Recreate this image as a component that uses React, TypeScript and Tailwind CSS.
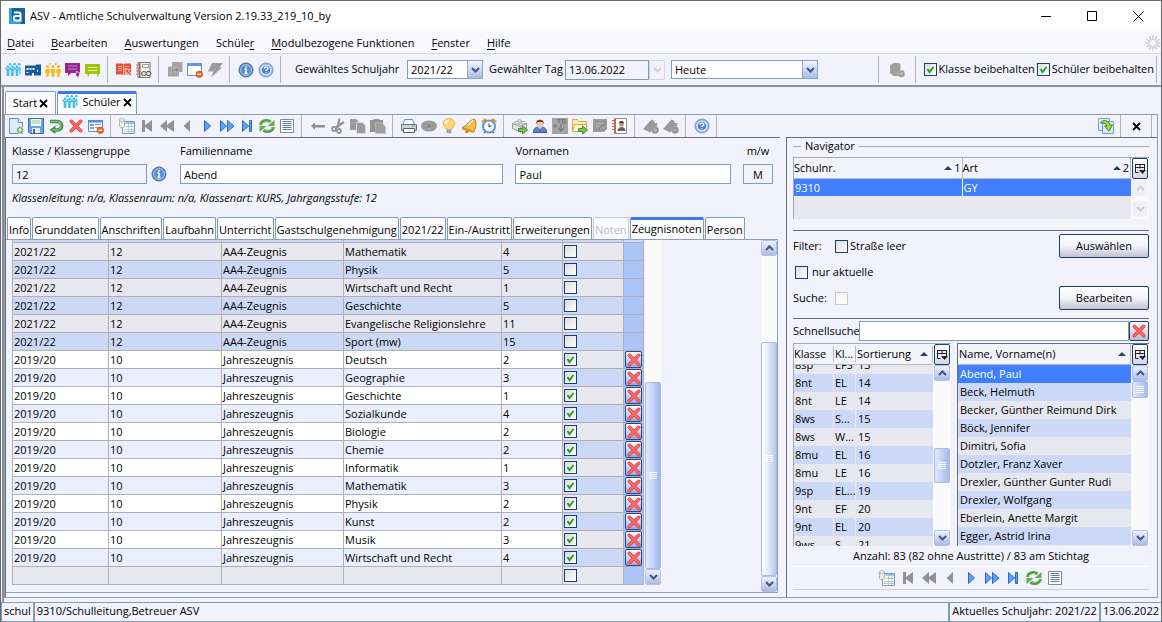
import type { ReactNode } from "react";
import clsx from "clsx";

interface IGrade {
  year: string;
  level: string;
  report: string;
  subject: string;
  grade: string;
  checked: boolean;
}

const current = (subject: string, grade: string): IGrade => ({
  year: "2021/22", level: "12", report: "AA4-Zeugnis", subject, grade, checked: false,
});
const past = (subject: string, grade: string): IGrade => ({
  year: "2019/20", level: "10", report: "Jahreszeugnis", subject, grade, checked: true,
});

const GRADES: IGrade[] = [
  current("Mathematik", "4"),
  current("Physik", "5"),
  current("Wirtschaft und Recht", "1"),
  current("Geschichte", "5"),
  current("Evangelische Religionslehre", "11"),
  current("Sport (mw)", "15"),
  past("Deutsch", "2"),
  past("Geographie", "3"),
  past("Geschichte", "1"),
  past("Sozialkunde", "4"),
  past("Biologie", "2"),
  past("Chemie", "2"),
  past("Informatik", "1"),
  past("Mathematik", "3"),
  past("Physik", "2"),
  past("Kunst", "2"),
  past("Musik", "3"),
  past("Wirtschaft und Recht", "4"),
  { year: "", level: "", report: "", subject: "", grade: "", checked: false },
];

const CLASSES = [
  ["8sp", "EFS", "13"],
  ["8nt", "EL", "14"],
  ["8nt", "LE", "14"],
  ["8ws", "S...", "15"],
  ["8ws", "W...", "15"],
  ["8mu", "EL", "16"],
  ["8mu", "LE", "16"],
  ["9sp", "EL...", "19"],
  ["9nt", "EF", "20"],
  ["9nt", "EL", "20"],
  ["9ws", "S", "21"],
];

const STUDENTS = [
  "Abend, Paul",
  "Beck, Helmuth",
  "Becker, Günther Reimund Dirk",
  "Böck, Jennifer",
  "Dimitri, Sofia",
  "Dotzler, Franz Xaver",
  "Drexler, Günther Gunter Rudi",
  "Drexler, Wolfgang",
  "Eberlein, Anette Margit",
  "Egger, Astrid Irina",
];

const MENU = [
  ["", "D", "atei"],
  ["", "B", "earbeiten"],
  ["", "A", "uswertungen"],
  ["Schüle", "r", ""],
  ["", "M", "odulbezogene Funktionen"],
  ["", "F", "enster"],
  ["", "H", "ilfe"],
];

const TABS = [
  "Info", "Grunddaten", "Anschriften", "Laufbahn", "Unterricht", "Gastschulgenehmigung",
  "2021/22", "Ein-/Austritt", "Erweiterungen", "Noten", "Zeugnisnoten", "Person",
];

/* ---------- icons ---------- */

function Svg({ children, size = 16 }: { children: ReactNode; size?: number }) {
  return (
    <svg width={size} height={size} viewBox="0 0 16 16" fill="none" aria-hidden="true" className="shrink-0">
      {children}
    </svg>
  );
}

const people = (
  <Svg>
    <g fill="#f8b912">
      {[2.5, 8, 13.5].map((x) => (
        <g key={x}>
          <circle cx={x} cy="4.500" r="1.600" />
          <path d={`M${x - 2.2} 7h4.400v4h-1v4h-2.400v-4h-1z`} />
        </g>
      ))}
      <circle cx="5.300" cy="2" r="1.100" />
      <circle cx="10.700" cy="2" r="1.100" />
    </g>
  </Svg>
);

const kids = (
  <Svg>
    <g fill="#3fc0e4">
      {[3, 7.5, 12].map((x) => (
        <g key={x}>
          <circle cx={x} cy="5" r="1.400" />
          <path d={`M${x - 1.3} 7.500h2.600v6.500h-2.600z`} />
        </g>
      ))}
      <circle cx="5.300" cy="2.300" r="1.300" />
      <circle cx="9.800" cy="2.300" r="1.300" />
      <circle cx="14.300" cy="2.300" r="1.300" />
    </g>
    <path d="M.5 6L3 8.500 5.300 6l2.200 2.500L9.800 6 12 8.500 15.300 5" stroke="#3fc0e4" strokeWidth="1.500" />
    <path d="M14.800 6v6" stroke="#3fc0e4" strokeWidth="1.200" />
  </Svg>
);

const school = (
  <Svg>
    <path d="M0 3.500h11V2.500h5v11H9V11H7v2.500H0z" fill="#165c9c" />
    <path d="M1.500 6h2v2h-2zM4.500 6h2v2h-2zM7.500 6h2v2h-2zM1.500 10h2v1h-2zM12 8h1v2h-1z" fill="#f4f7ff" />
  </Svg>
);

const chatPurple = (
  <Svg>
    <path d="M0 1h15v10H6l-3 3v-3H0z" fill="#93268f" />
    <path d="M3 4h9M3 7h9" stroke="#c98bc7" />
    <path d="M11.500 9.500l3.500 1.500-1.500 4.500-3-2z" fill="#93268f" stroke="#f0dcef" strokeWidth=".8" />
  </Svg>
);

const chatGreen = (
  <Svg>
    <path d="M0 2h15v10h-1.500v2.500h-1.500V12H4v2.500H2.500V12H0z" fill="#a0c40e" />
    <path d="M3 5.500h9M3 8.500h9" stroke="#e2f0b8" strokeWidth="1.200" />
  </Svg>
);

const bookRed = (
  <Svg>
    <path d="M0 1.500h6.500L7.500 2.500l1-1H15v11H8.500l-1 1-1-1H0z" fill="#e8502f" />
    <path d="M2 4.500h4M2 6.500h4M2 8.500h4M9 4.500h4M7.500 3v10" stroke="#f7b8a8" />
    <path d="M9 6.500l5 1-1.500 1.500 3 3.500-1.500 1.500-3-3.500-1.500 1.500z" fill="#e8502f" stroke="#fff" strokeWidth=".8" />
  </Svg>
);

const notebook = (
  <Svg>
    <path d="M2 .5h12v15H2z" fill="#f0f0f3" stroke="#777" />
    <path d="M3 1h1.500v14H3z" fill="#c0583b" />
    <path d="M0 3h3M0 6h3M0 9h3M0 12h3" stroke="#888" />
    <path d="M6.500 2.500h6v3h-6z" stroke="#999" fill="#fff" />
    <rect x="5.500" y="9.500" width="5" height="4" rx="2" stroke="#555" fill="#ddd" />
    <rect x="10" y="9.500" width="5" height="4" rx="2" stroke="#555" fill="#ddd" />
  </Svg>
);

const grayCards = (
  <Svg>
    <path d="M5 0h10.500v10H12v4.500H1V4.500h4z" fill="#a4a4a4" />
    <path d="M4 11.500c0-4 2-5 4.500-5v-2l4 3.200-4 3.200V9c-2 0-3 .8-4.500 2.500z" fill="#8b8b8b" stroke="#c6c6c6" strokeWidth=".7" />
  </Svg>
);

const minusDot = (
  <>
    <circle cx="12.300" cy="12.300" r="3.300" fill="#e8641b" stroke="#c84a0c" strokeWidth=".6" />
    <path d="M10.500 12.300h3.600" stroke="#fff" strokeWidth="1.400" />
  </>
);

const windowMinus = (
  <Svg>
    <path d="M.5 1.500h14v12H.5z" fill="#fff" stroke="#5b8fd0" />
    <path d="M0 1h15v3H0z" fill="#5b9be0" />
    {minusDot}
  </Svg>
);

const bolt = (
  <Svg>
    <path d="M5 1h11l-3.500 4.500H15L4 15.500 6.500 9.500H1z" fill="#9a9a9a" />
  </Svg>
);

const info = (
  <Svg>
    <circle cx="8" cy="8" r="7" fill="#5c8ec8" stroke="#3e6ca6" strokeWidth="1" />
    <circle cx="8" cy="8" r="5.400" stroke="#b4cfec" strokeWidth=".9" />
    <path d="M8 4v1.600M6.500 7H8v4.500M6.500 11.500h3" stroke="#fff" strokeWidth="1.500" />
  </Svg>
);

const help = (
  <Svg>
    <circle cx="8" cy="8" r="7" fill="#8fb4de" stroke="#7298c8" strokeWidth="1" />
    <circle cx="8" cy="8" r="5" fill="#5088cc" stroke="#e6effa" strokeWidth="1.200" />
    <path d="M6.200 6.700c0-2.600 3.700-2.400 3.600-.2 0 1.200-1.800 1.300-1.800 2.600M8 10.300v1.300" stroke="#fff" strokeWidth="1.300" />
  </Svg>
);

const newDoc = (
  <Svg>
    <path d="M1.500.5h9l4 4v11h-13z" fill="#dcebfa" stroke="#5f94cf" />
    <path d="M10.500.5v4h4" fill="#fff" stroke="#5f94cf" />
    <circle cx="12" cy="12" r="3.500" fill="#5da845" stroke="#fff" strokeWidth=".7" />
    <path d="M12 10v4M10 12h4" stroke="#fff" strokeWidth="1.200" />
  </Svg>
);

const save = (
  <Svg>
    <path d="M.5.5h15v15H2L.5 14z" fill="#6ea3de" stroke="#3c70ae" />
    <path d="M3 1h10v7H3z" fill="#f1f6ea" />
    <path d="M4 3h8M4 5h8" stroke="#a7c48f" />
    <path d="M4 10h8v5H4z" fill="#dfe8f4" />
    <path d="M5 11h2v4H5z" fill="#3c70ae" />
  </Svg>
);

const undo = (
  <Svg>
    <path d="M2 3.500h7.500c5.500 0 5.500 8.500 0 8.500H7" stroke="#3f8f45" strokeWidth="3.600" />
    <path d="M7.500 7.500v8.500L1.500 12z" fill="#3f8f45" />
    <path d="M2.500 3.500h7c4.500 0 4.500 8.500 0 8.500H4" stroke="#7cc27a" strokeWidth="1.400" />
  </Svg>
);

const cross = (
  <Svg>
    <path d="M3.300 3.300l9.400 9.400M12.700 3.300l-9.400 9.400" stroke="#e03f3f" strokeWidth="3.600" strokeLinecap="round" />
    <path d="M3.300 3.300l9.400 9.400M12.700 3.300l-9.400 9.400" stroke="#ff6a68" strokeWidth="2.200" strokeLinecap="round" />
  </Svg>
);

const formMinus = (
  <Svg>
    <path d="M.5 2.500h14v11H.5z" fill="#f3f8ff" stroke="#5b8fd0" />
    <path d="M0 2h15v2.500H0z" fill="#4f8fdd" />
    <path d="M2 7h4M2 10h4" stroke="#444" />
    <path d="M7 6.500h6M7 9.500h3" stroke="#7aa5d8" />
    {minusDot}
  </Svg>
);

const dbTable = (
  <Svg>
    <path d="M3.500 3.500h12v12h-12z" fill="#fff" stroke="#6f9cd6" />
    <path d="M6.500 4H15v2H6.500z" fill="#9cc2ea" />
    <path d="M6.500 8.500H15M5 11.500h10M5 13.500h10" stroke="#9acb96" strokeWidth=".8" />
    <path d="M9.500 6v9M12.500 6v9" stroke="#a8c8ea" strokeWidth=".8" />
    <path d="M.5 2v6.500c0 1.700 5 1.700 5 0V2" fill="#ececec" stroke="#a5a5a5" strokeWidth=".8" />
    <ellipse cx="3" cy="2" rx="2.500" ry="1.400" fill="#fafafa" stroke="#a5a5a5" strokeWidth=".8" />
  </Svg>
);

const firstRec = (
  <Svg>
    <path d="M3 2h3v5l7-5v12L6 9v5H3z" fill="#929292" />
  </Svg>
);
const rewind = (
  <Svg>
    <path d="M8 2v5l7-5v12L8 9v5L1 8z" fill="#929292" />
  </Svg>
);
const prev = (
  <Svg>
    <path d="M11 2v12L4.500 8z" fill="#929292" />
  </Svg>
);
const next = (
  <Svg>
    <path d="M5.500 2.500v11l6-5.500z" fill="#5da2f5" stroke="#2a6ad0" />
  </Svg>
);
const forward = (
  <Svg>
    <path d="M1.500 2.500v11l6-5.500zM8.500 2.500v11L15 8z" fill="#5da2f5" stroke="#2a6ad0" />
  </Svg>
);
const lastRec = (
  <Svg>
    <path d="M3.500 2.500v11l6-5.500zM10.500 2.500h2v11h-2z" fill="#5da2f5" stroke="#2a6ad0" />
    <path d="M9.500 8l1.500-4v8z" fill="#2a6ad0" />
  </Svg>
);

const refresh = (
  <Svg>
    <path d="M1.500 7c1-5 7-5.500 10-3" stroke="#4f9f43" strokeWidth="3" />
    <path d="M15.500 2v6H8.500z" fill="#5fae50" />
    <path d="M14.500 9c-1 5-7 5.500-10 3" stroke="#4f9f43" strokeWidth="3" />
    <path d="M.5 14V8h7z" fill="#5fae50" />
    <path d="M2.500 6.500c2-3.500 6-3.500 9-1.500M13.500 9.500c-2 3.500-6 3.500-9 1.500" stroke="#9fd694" strokeWidth=".9" />
  </Svg>
);

const listDoc = (
  <Svg>
    <path d="M1.500 1.500h13v13h-13z" fill="#fff" stroke="#8a8a8a" />
    <path d="M3.500 3.500h9M3.500 5.500h9M3.500 7.500h9M3.500 9.500h9M3.500 11.500h9" stroke="#5a7ba8" />
  </Svg>
);

const arrowLeft = (
  <Svg>
    <path d="M1 8l4-3.500V7h10v2.500H5V12z" fill="#8e8e8e" />
  </Svg>
);

const scissors = (
  <Svg>
    <path d="M9.500.5L7.500 10M14 4l-9 6" stroke="#959595" strokeWidth="2.200" />
    <circle cx="4" cy="11" r="2" stroke="#959595" strokeWidth="1.800" />
    <circle cx="9" cy="13" r="2" stroke="#959595" strokeWidth="1.800" />
  </Svg>
);

const copy = (
  <Svg>
    <path d="M0 1h6l3 3v8H0z" fill="#9c9c9c" />
    <path d="M6.500 4.500h6l3 3v8h-9z" fill="#9c9c9c" stroke="#e0e0ea" strokeWidth=".8" />
  </Svg>
);

const paste = (
  <Svg>
    <path d="M0 2h3l1-1h5l1 1h3v12H0z" fill="#959595" />
    <path d="M5.500 4.500h6l4 4v7h-10z" fill="#9f9f9f" stroke="#bdbdc2" strokeWidth=".6" />
  </Svg>
);

const printer = (
  <Svg>
    <path d="M3.500 1.500h8l2 5h-11z" fill="#fff" stroke="#6491c9" />
    <path d="M.5 6.500h15v6H.5z" fill="#cdd3dd" stroke="#6a7484" />
    <path d="M2.500 10.500h11v4h-11z" fill="#f8fbff" stroke="#59626f" />
    <path d="M11 8h3" stroke="#54ad45" />
  </Svg>
);

const eye = (
  <Svg>
    <ellipse cx="8" cy="8" rx="8" ry="5.500" fill="#9a9a9a" />
    <circle cx="8" cy="8" r="2.600" fill="#858585" stroke="#aaa" />
  </Svg>
);

const bulb = (
  <Svg>
    <path d="M8 .6C4.500.6 2 3 2.200 6c.2 2.200 2.300 3.300 3.300 5.500h5c1-2.200 3.100-3.300 3.300-5.500.2-3-2.300-5.400-5.800-5.400z" fill="#fbd57a" stroke="#e8b049" />
    <path d="M4.500 5.500c.3-2 1.700-3 3.500-3" stroke="#fff6dc" strokeWidth="2" />
    <path d="M5.500 11.500h5v3l-1 1h-3l-1-1z" fill="#a2a8b3" />
  </Svg>
);

const bell = (
  <Svg>
    <path d="M13.500 1c2 3 2 8-.5 12.500L1 9.500c5-1 6-7 12.500-8.500z" fill="#f2bd4b" stroke="#c07d16" />
    <path d="M1 9.500l12 4-1 1.500L1 11.500z" fill="#e09a2a" />
    <circle cx="6" cy="13.500" r="1.800" fill="#d58a1b" />
    <path d="M7 8c1-3 3-4.500 5.500-5.500" stroke="#fbe9b8" strokeWidth="1.500" />
  </Svg>
);

const clock = (
  <Svg>
    <path d="M1 4l4-3M15 4l-4-3" stroke="#e29a2b" strokeWidth="2.500" />
    <path d="M3 15l2-2M13 15l-2-2" stroke="#666" strokeWidth="1.500" />
    <circle cx="8" cy="8.500" r="6" fill="#fff" stroke="#5f9ada" strokeWidth="2.200" />
    <path d="M8 5.500v3.500l2.500-1.500" stroke="#335" />
  </Svg>
);

const greenArrow = <path d="M6.500 10.500h4V8l5 4-5 4v-2.500h-4z" fill="#6cc84c" stroke="#3b8a2a" strokeWidth=".9" />;

const boxExport = (
  <Svg>
    <path d="M.5 5.500L6.500 2.500l8 3v5l-6 3.500-8-3.500z" fill="#e2e2e2" stroke="#999" />
    <path d="M.5 5.500l8 3 6-3M8.500 8.500V14" stroke="#a5a5a5" />
    <g fill="#f4f4f4" stroke="#999" strokeWidth=".7">
      <ellipse cx="4.500" cy="4.500" rx="1.800" ry="1.200" />
      <ellipse cx="7.500" cy="2.800" rx="1.800" ry="1.200" />
      <ellipse cx="8.500" cy="6" rx="1.800" ry="1.200" />
      <ellipse cx="11.500" cy="4.500" rx="1.800" ry="1.200" />
    </g>
    {greenArrow}
  </Svg>
);

const person = (
  <Svg>
    <path d="M1.500 14.500C1.500 10 4 9 8 9s6.500 1 6.500 5.500z" fill="#4a8ad6" stroke="#2b5fa3" />
    <circle cx="8" cy="5.500" r="3.500" fill="#f3c9a0" />
    <path d="M4 6C3.500.3 12.500.3 12 6l-1.500-2h-5z" fill="#6b4030" />
    <path d="M6 9.200h4l-2 2.500z" fill="#fff" />
    <path d="M8 10l1.200 1.500L8 14.500l-1.200-3z" fill="#d63a2a" />
  </Svg>
);

const tbGray = (
  <Svg>
    <path d="M0 0h16v16H0z" fill="#a4a4a4" />
    <path d="M5 1.500h4M7 1.500V5M10.500 1.500V5h2.500V1.500zM1 8h4M3 6v4M9 6v7M6 10l3 3 3-3" stroke="#7c7c7c" strokeWidth="1.300" />
  </Svg>
);

const folderExport = (
  <Svg>
    <path d="M.5 1.500h5l1.500 2h7.500v10H.5z" fill="#fdeeb4" stroke="#d9a93d" />
    <path d="M2.500 6.500h12v7H.5z" fill="#fff7da" stroke="#d9a93d" />
    {greenArrow}
  </Svg>
);

const editGray = (
  <Svg>
    <path d="M1 1h14v10l-3 3H1z" fill="#9d9d9d" />
    <path d="M3 3.500h10v8H3z" fill="#a6a6a6" stroke="#8e8e8e" />
    <path d="M6 11.500l8-7" stroke="#868686" strokeWidth="1.400" />
  </Svg>
);

const contacts = (
  <Svg>
    <path d="M2.500.5h12v15h-12z" fill="#fff" stroke="#9c8a80" />
    <path d="M2 1h2v14H2z" fill="#d0603f" />
    <path d="M0 2.500h3M0 5.500h3M0 8.500h3M0 11.500h3" stroke="#b07a60" />
    <circle cx="9.500" cy="6.500" r="2.300" fill="#c09068" />
    <path d="M6.800 6c0-4 5.400-4 5.400 0l-1-1h-3.400z" fill="#3a3230" />
    <path d="M5.500 13c0-5.500 8-5.500 8 0z" fill="#5b626e" />
  </Svg>
);

const tagGray = (sign: string) => (
  <Svg>
    <path d="M0 11L8.500 1.500 11.500 3v2h3l-.5 3L7 14.500z" fill="#9a9a9a" />
    <circle cx="12" cy="12" r="3.500" fill="#959595" stroke="#a8a8a8" strokeWidth=".7" />
    <path d={sign} stroke="#bdbdbd" />
  </Svg>
);

const dbGray = (
  <Svg>
    <path d="M1 3.500L4.500 1H10l1.500 1.500V12L10 14H4.500L1 11z" fill="#a0a0a0" />
    <path d="M2 5h8M2 8h8" stroke="#969696" />
    <circle cx="12.300" cy="11.800" r="3.500" fill="#9b9b9b" stroke="#c0c0c0" strokeWidth=".7" />
    <path d="M12.300 9.800v4M10.300 11.800h4" stroke="#c0c0c0" />
  </Svg>
);

const sync = (
  <Svg>
    <path d="M.5.5h11v12H.5z" fill="#e5f0fc" stroke="#6ea0d6" />
    <path d="M4.500 3.500h11v12h-11z" fill="#d6e7f9" stroke="#6ea0d6" />
    <path d="M2.500 5c1-3.500 8.500-3.500 9.500 2h2.500L11 13 6.500 8H9C8.500 5.500 6 5 2.500 5z" fill="#a6d837" stroke="#3f8a23" strokeWidth="1" />
  </Svg>
);

const columnPicker = (
  <svg width="12" height="12" viewBox="0 0 12 12" fill="none" aria-hidden="true" className="shrink-0">
    <path d="M1 1.500h10M1.500 1v8.500M6 1.500v4M1 4.500h10M10.500 1v6M1.500 9.500h3" stroke="#222" />
    <path d="M5 7h7l-3.500 4z" fill="#222" />
  </svg>
);

function Chevron({ up, muted }: { up?: boolean; muted?: boolean }) {
  return (
    <svg width="9" height="6" viewBox="0 0 9 6" fill="none" aria-hidden="true">
      <path d={up ? "M1 5l3.500-3.500L8 5" : "M1 1l3.500 3.500L8 1"} stroke={muted ? "#cfcfd6" : "#40577f"} strokeWidth="2" />
    </svg>
  );
}

/* ---------- controls ---------- */

function Sep() {
  return <span className="ml-1 mr-1.5 w-px self-stretch bg-[#b4b4bc]" />;
}

function Tools({ items, label, className }: { items: ReactNode[]; label: string; className?: string }) {
  return (
    <div className={clsx("flex", className)} role="group" aria-label={label}>
      {items.map((icon, i) => (
        <button key={i} type="button" aria-label={`${label} ${i + 1}`} className="grid h-5 w-5 place-items-center">
          {icon}
        </button>
      ))}
    </div>
  );
}

function Check({ id, checked, disabled, label }: { id: string; checked?: boolean; disabled?: boolean; label?: string }) {
  return (
    <span className="relative block h-[13px] w-[13px] shrink-0">
      <input
        id={id}
        type="checkbox"
        defaultChecked={checked}
        disabled={disabled}
        aria-label={label}
        className="peer block h-[13px] w-[13px] appearance-none border border-[#1c3f73] bg-linear-to-br from-[#dcdcdc] to-white disabled:border-[#cacad2] disabled:from-[#f4f4f4]"
      />
      <svg viewBox="0 0 13 13" fill="none" className="pointer-events-none absolute inset-0 hidden peer-checked:block" aria-hidden="true">
        <path d="M3.500 6l2 3L9.500 4" stroke="#21a121" strokeWidth="2" />
      </svg>
    </span>
  );
}

function Picker({ id, value, label, className }: { id: string; value: string; label?: string; className: string }) {
  return (
    <span className={clsx("relative block", className)}>
      <select id={id} aria-label={label} className="block h-[19px] w-full appearance-none border border-[#7f9db9] bg-white pl-[3px] text-[11px] leading-4">
        <option>{value}</option>
      </select>
      <span className="pointer-events-none absolute inset-y-0 right-0 grid w-4 place-items-center rounded-xs border border-[#8fa6cf] bg-linear-to-b from-[#f4f6ff] to-[#a9bbe6]">
        <Chevron />
      </span>
    </span>
  );
}

function ScrollButton({ up, muted, label }: { up?: boolean; muted?: boolean; label: string }) {
  return (
    <button
      type="button"
      aria-label={label}
      className={clsx(
        "grid h-4 w-4 shrink-0 place-items-center rounded-xs border",
        muted ? "border-[#f4f4f8] bg-[#f0f0f4]" : "border-[#b3c2e4] bg-linear-to-b from-[#eef2ff] to-[#a9bbe6]",
      )}
    >
      <Chevron up={up} muted={muted} />
    </button>
  );
}

function Thumb({ className }: { className: string }) {
  return (
    <div className={clsx("grid w-4 shrink-0 place-items-center rounded-xs border border-[#a9bbe3]", className)}>
      <div className="h-2 w-2 bg-[repeating-linear-gradient(180deg,#fff_0_1px,transparent_1px_2px)]" />
    </div>
  );
}

function PickerButton() {
  return (
    <button
      type="button"
      aria-label="Spalten wählen"
      className="grid h-[21px] w-4 shrink-0 place-items-center rounded-xs border border-[#1c3f73] bg-linear-to-b from-white to-[#d4d4e4]"
    >
      {columnPicker}
    </button>
  );
}

function PushButton({ children }: { children: ReactNode }) {
  return (
    <button
      type="button"
      className="h-6 w-[90px] rounded-xs border border-[#1c3f73] bg-linear-to-b from-white via-[#f2f2fa] to-[#c2c2d4]"
    >
      {children}
    </button>
  );
}

const SortMark = () => <span className="block h-0 w-0 border-x-4 border-b-4 border-x-transparent border-b-[#26405e]" />;

/* ---------- window chrome ---------- */

function TitleBar() {
  return (
    <header className="flex h-[30px] items-center bg-white pl-2">
      <svg width="16" height="16" viewBox="0 0 16 16" aria-hidden="true">
        <path d="M0 0h16v16H0z" fill="#17639f" />
        <path d="M0 0h3v16H0zM0 13h12v3H0z" fill="#2fa3dc" />
        <path d="M5 4.500h4.500c1.500 0 2 .8 2 2V12.500H7c-3 0-3-4.500 0-4.500h4" fill="none" stroke="#fff" strokeWidth="2" />
      </svg>
      <h1 className="ml-[5px] flex-1">ASV - Amtliche Schulverwaltung Version 2.19.33_219_10_by</h1>
      <div className="flex">
        <button type="button" aria-label="Minimieren" className="grid h-7 w-[46px] place-items-center">
          <svg width="11" height="11" viewBox="0 0 11 11"><path d="M0 5.500h10" stroke="#000" /></svg>
        </button>
        <button type="button" aria-label="Maximieren" className="grid h-7 w-[46px] place-items-center">
          <svg width="11" height="11" viewBox="0 0 11 11" fill="none"><path d="M.5.5h9v9h-9z" stroke="#000" /></svg>
        </button>
        <button type="button" aria-label="Schließen" className="grid h-7 w-[46px] place-items-center">
          <svg width="11" height="11" viewBox="0 0 11 11"><path d="M.5.5l10 10M10.500.5l-10 10" stroke="#000" /></svg>
        </button>
      </div>
    </header>
  );
}

function MenuBar() {
  return (
    <nav className="flex h-[23px] items-center border-b border-[#d6d6e0] bg-[#f9f9fd] pl-1.5 pt-0.5">
      {MENU.map(([pre, key, post]) => (
        <button key={key + post} type="button" className="mr-[17px]">
          {pre}
          <span className="underline underline-offset-2">{key}</span>
          {post}
        </button>
      ))}
      <svg width="16" height="16" viewBox="0 0 16 16" className="ml-auto" aria-hidden="true">
        {Array.from({ length: 12 }, (_, i) => (
          <path key={i} d="M8 .5v4.500" stroke="#c2c2c6" strokeWidth="1.300" transform={`rotate(${i * 30} 8 8)`} />
        ))}
      </svg>
    </nav>
  );
}

function MainToolbar() {
  return (
    <div className="flex h-[33px] items-center border-b-2 border-[#93939b] py-0.5 pl-0.5">
      <Tools label="Module" items={[kids, school, people, chatPurple, chatGreen]} />
      <Sep />
      <Tools label="Berichte" items={[bookRed, notebook]} />
      <Sep />
      <Tools label="Fenster" items={[grayCards, windowMinus, bolt]} />
      <Sep />
      <Tools label="Hilfe" items={[info, help]} />
      <Sep />
      <label htmlFor="jahr" className="ml-2 w-[104px] text-center">Gewähltes Schuljahr</label>
      <Picker id="jahr" value="2021/22" className="ml-2 w-[76px]" />
      <label htmlFor="tag" className="ml-1 w-[78px] text-center">Gewählter Tag</label>
      <input id="tag" defaultValue="13.06.2022" className="h-5 w-[84px] border border-[#7f9db9] bg-transparent px-[3px]" />
      <button type="button" aria-label="Tag wählen" disabled className="grid h-5 w-4 place-items-center rounded-xs border border-[#d4d4de]">
        <Chevron muted />
      </button>
      <Picker id="bezug" value="Heute" label="Bezug" className="ml-1.5 w-[147px]" />
      <span className="ml-auto w-px self-stretch bg-[#b4b4bc]" />
      <Tools label="Daten" items={[dbGray]} className="mx-2" />
      <span className="mr-2 w-px self-stretch bg-[#b4b4bc]" />
      <Check id="klasse-halten" checked />
      <label htmlFor="klasse-halten" className="mx-0.5">Klasse beibehalten</label>
      <Check id="schueler-halten" checked />
      <label htmlFor="schueler-halten" className="mx-0.5">Schüler beibehalten</label>
      <span className="mr-1 w-px self-stretch bg-[#b4b4bc]" />
    </div>
  );
}

function CloseMark() {
  return (
    <svg width="9" height="9" viewBox="0 0 9 9" aria-hidden="true">
      <path d="M1 1l7 7M8 1L1 8" stroke="#000" strokeWidth="1.800" />
    </svg>
  );
}

function RecordToolbar() {
  return (
    <div className="flex h-[22px] items-center pl-px">
      <Tools label="Datensatz" items={[newDoc, save, undo, cross, formMinus]} />
      <Sep />
      <Tools label="Navigation" items={[dbTable, firstRec, rewind, prev, next, forward, lastRec, refresh, listDoc]} />
      <Sep />
      <Tools label="Bearbeiten" items={[arrowLeft, scissors, copy, paste]} />
      <Sep />
      <Tools label="Ausgabe" items={[printer, eye, bulb, bell, clock]} />
      <Sep />
      <Tools label="Austausch" items={[boxExport, person, tbGray, folderExport, editGray, contacts]} />
      <Sep />
      <Tools label="Etiketten" items={[tagGray("M12 10v4M10 12h4"), tagGray("M10 12h4")]} />
      <Sep />
      <Tools label="Hilfe" items={[help]} />
      <Sep />
      <span className="ml-auto flex items-center self-stretch">
        <Tools label="Ansicht" items={[sync]} />
        <span className="ml-1 w-px self-stretch bg-[#b4b4bc]" />
        <button type="button" aria-label="Bereich schließen" className="grid w-[30px] place-items-center"><CloseMark /></button>
        <span className="mr-[5px] w-px self-stretch bg-[#b4b4bc]" />
      </span>
    </div>
  );
}

/* ---------- student form ---------- */

function Field({ id, label, value, className, input }: { id: string; label: string; value: string; className: string; input?: string }) {
  return (
    <div className={clsx("flex flex-col gap-[5px]", className)}>
      <label htmlFor={id} className="leading-4">{label}</label>
      <input id={id} defaultValue={value} className={clsx("h-5 w-full border border-[#7f9db9] px-[3px]", input ?? "bg-white")} />
    </div>
  );
}

function StudentForm() {
  return (
    <section className="flex min-w-0 flex-1 flex-col border-l border-t border-[#6e6e76]">
      <div className="flex items-end pl-1.5 pr-[7px] pt-[5px]">
        <Field id="klasse" label="Klasse / Klassengruppe" value="12" className="w-[135px]" input="bg-transparent" />
        <span className="mx-[3px] grid h-5 w-[18px] place-items-center">{info}</span>
        <Field id="name" label="Familienname" value="Abend" className="ml-[9px] flex-324" />
        <Field id="vorname" label="Vornamen" value="Paul" className="ml-3 flex-216" />
        <Field id="mw" label="m/w" value="M" className="ml-3 w-[30px] text-center" input="bg-transparent text-center" />
      </div>
      <p className="pb-[11px] pl-1.5 pt-1.5 italic leading-4">
        Klassenleitung: n/a, Klassenraum: n/a, Klassenart: KURS, Jahrgangsstufe: 12
      </p>
      <div className="flex gap-px pl-px" role="tablist">
        {TABS.map((t) => (
          <button
            key={t}
            type="button"
            role="tab"
            aria-selected={t === "Zeugnisnoten"}
            className={clsx(
              "h-[22px] rounded-t-xs border border-b-0 bg-[#fcfcff] px-px",
              t === "Noten" ? "border-[#c3cedd] text-[#b9b9c2]" : "border-[#7f9db9]",
              t === "Zeugnisnoten" ? "border-t-3 border-t-[#3d78f0]" : "pt-1",
            )}
          >
            {t}
          </button>
        ))}
      </div>
      <div className="mb-1 mr-0.5 flex flex-1 border border-l-0 border-[#8aa0bd]">
        <div className="ml-1.5 pb-[7px]">
          <div className="flex">
            <GradeTable />
            <div className="ml-px flex w-4 flex-col bg-[#fafafd]">
              <div className="flex-1" />
              <Thumb className="h-[187px] bg-linear-to-r from-[#dfe8ff] via-[#c2d2fa] to-[#9fb6ea]" />
              <ScrollButton label="Nach unten" />
            </div>
          </div>
        </div>
        <div className="ml-auto flex w-4 flex-col bg-[#fafafd]">
          <ScrollButton up label="Nach oben" />
          <div className="flex-1" />
          <Thumb className="h-[234px] bg-linear-to-r from-white via-[#dfe6fb] to-[#b6c6ee]" />
          <ScrollButton label="Nach unten" />
        </div>
      </div>
    </section>
  );
}

function GradeTable() {
  return (
    <table className="w-[632px] table-fixed border-separate border-spacing-0 border-l border-[#b0b0b4]">
      <colgroup>
        <col className="w-[96px]" />
        <col className="w-[113px]" />
        <col className="w-[122px]" />
        <col className="w-[158px]" />
        <col className="w-[61px]" />
        <col className="w-[61px]" />
        <col className="w-[20px]" />
      </colgroup>
      <tbody className="[&_td]:border-b [&_td]:border-r [&_td]:border-[#b0b0b4] [&_td]:p-0 [&_td]:pl-px">
        <tr className="h-[3px] bg-[#cbd9f6]">
          {Array.from({ length: 7 }, (_, i) => <td key={i} />)}
        </tr>
        {GRADES.map((g, i) => {
          const odd = i % 2 === 1;
          const flag = odd ? "bg-[#cbd9f6]" : "bg-[#e7e7f0]";
          const row = !g.checked ? flag : odd ? "bg-[#e9effe]" : "bg-white";
          return (
            <tr key={i} className={clsx("h-[18px] leading-4", row)}>
              <td>{g.year}</td>
              <td>{g.level}</td>
              <td>{g.report}</td>
              <td>{g.subject}</td>
              <td>{g.grade}</td>
              <td className={flag}>
                <Check id={`zeugnis-${i}`} checked={g.checked} label={`${g.subject || "Neu"} im Zeugnis`} />
              </td>
              <td className="bg-[#abc5f7]">
                {g.checked && (
                  <button
                    type="button"
                    aria-label={`${g.subject} löschen`}
                    className="grid h-[17px] w-[17px] place-items-center rounded-xs border border-[#24498a] bg-linear-to-b from-white to-[#8fabe6]"
                  >
                    {cross}
                  </button>
                )}
              </td>
            </tr>
          );
        })}
      </tbody>
    </table>
  );
}

/* ---------- navigator ---------- */

function Rule() {
  return <hr className="border-t border-[#6e6e76]" />;
}

function Navigator() {
  return (
    <aside className="ml-1.5 flex w-[371px] shrink-0 flex-col border-l border-t border-[#6e6e76] pb-1.5 pl-1.5 pr-2">
      <h2 className="flex items-center gap-1 leading-4 before:h-px before:w-2 before:bg-[#a8a8b0] after:h-px after:flex-1 after:bg-[#a8a8b0]">
        Navigator
      </h2>
      <div className="mt-[3px] flex h-[62px] border-l border-t border-[#a8a8b0] bg-[#e7e7f0]">
        <div className="min-w-0 flex-1">
          <table className="w-full table-fixed border-separate border-spacing-0">
            <thead>
              <tr className="h-[21px] bg-[#f3f3fb]">
                {[["Schulnr.", "1"], ["Art", "2"]].map(([name, order]) => (
                  <th key={name} className="border-b border-r border-[#b8b8c0] p-0 font-normal">
                    <span className="flex items-center gap-0.5 pr-px">
                      <span className="flex-1 text-left">{name}</span>
                      <SortMark />
                      {order}
                    </span>
                  </th>
                ))}
              </tr>
            </thead>
            <tbody>
              <tr className="h-[17px] bg-[#407fff] leading-4 text-white">
                <td className="border-r border-white p-0 pl-px">9310</td>
                <td className="p-0 pl-px">GY</td>
              </tr>
            </tbody>
          </table>
        </div>
        <div className="flex w-[18px] flex-col items-center bg-[#fafafd]">
          <PickerButton />
          <div className="mt-px flex flex-1 flex-col justify-between pb-0.5">
            <ScrollButton up muted label="Nach oben" />
            <ScrollButton muted label="Nach unten" />
          </div>
        </div>
      </div>
      <div className="mb-1 mt-1.5 h-px bg-white" />
      <Rule />
      <div className="my-[3px] flex flex-col gap-0.5">
        <div className="flex h-6 items-center">
          <span className="w-[42px]">Filter:</span>
          <Check id="strasse" />
          <label htmlFor="strasse" className="ml-0.5 flex-1">Straße leer</label>
          <PushButton>Auswählen</PushButton>
        </div>
        <div className="flex h-6 items-center pl-0.5">
          <Check id="aktuelle" />
          <label htmlFor="aktuelle" className="ml-1">nur aktuelle</label>
        </div>
        <div className="flex h-6 items-center">
          <label htmlFor="suche" className="w-[42px]">Suche:</label>
          <Check id="suche" disabled />
          <span className="flex-1" />
          <PushButton>Bearbeiten</PushButton>
        </div>
      </div>
      <div className="mb-1 h-px bg-white" />
      <Rule />
      <div className="my-0.5 flex items-center">
        <label htmlFor="schnell" className="w-[66px]">Schnellsuche</label>
        <input id="schnell" className="h-5 min-w-0 flex-1 border border-[#7f9db9] bg-white px-1" />
        <button type="button" aria-label="Suche löschen" className="grid h-5 w-5 place-items-center rounded-xs border border-[#1c3f73] bg-linear-to-b from-white to-[#b8bed0]">
          {cross}
        </button>
      </div>
      <div className="flex h-[203px] gap-1.5">
        <ClassList />
        <StudentList />
      </div>
      <p className="border-b border-white py-0.5 text-center leading-4">Anzahl: 83 (82 ohne Austritte) / 83 am Stichtag</p>
      <div className="flex h-[23px] items-center justify-center border-b border-[#cfcfdc]">
        <Tools
          label="Schüler"
          items={[dbTable, firstRec, rewind, prev, next, forward, lastRec, refresh, listDoc]}
          className="gap-px"
        />
      </div>
    </aside>
  );
}

function ClassList() {
  return (
    <div className="flex w-[158px] shrink-0 border-l border-t border-[#a8a8b0] bg-[#e7e7f0]">
      <div className="flex min-w-0 flex-1 flex-col">
        <div className="flex h-[21px] shrink-0 items-center border-b border-[#b8b8c0] bg-[#f3f3fb]">
          <span className="w-[40px] border-r border-[#b8b8c0]">Klasse</span>
          <span className="w-[22px] border-r border-[#b8b8c0] pl-px">Kl...</span>
          <span className="flex flex-1 items-center justify-between border-r border-[#b8b8c0] pl-px pr-1">
            Sortierung <SortMark />
          </span>
        </div>
        {/* scrolled half a row down */}
        <div className="min-h-0 flex-1 overflow-hidden">
          <table className="-mt-[9px] w-full table-fixed border-separate border-spacing-0 leading-4">
            <colgroup>
              <col className="w-[40px]" />
              <col className="w-[22px]" />
              <col />
            </colgroup>
            <tbody>
              {CLASSES.map(([klasse, short, order], i) => (
                <tr key={i} className={clsx("h-[18px]", i % 2 === 1 && "bg-[#cbd9f6]")}>
                  <td className="border-r border-[#e7e7f0] p-0 pl-px">{klasse}</td>
                  <td className="border-r border-[#e7e7f0] p-0 pl-px">{short}</td>
                  <td className="p-0 pl-0.5">{order}</td>
                </tr>
              ))}
            </tbody>
          </table>
        </div>
      </div>
      <div className="flex w-[18px] flex-col items-center bg-[#fafafd]">
        <PickerButton />
        <ScrollButton up label="Nach oben" />
        <div className="flex-2" />
        <Thumb className="h-[35px] bg-linear-to-r from-[#dfe8ff] to-[#a5baec]" />
        <div className="flex-[1.4]" />
        <ScrollButton label="Nach unten" />
      </div>
    </div>
  );
}

function StudentList() {
  return (
    <div className="flex min-w-0 flex-1 border-l border-t border-[#6e6e76] bg-[#e7e7f0]">
      <div className="min-w-0 flex-1 overflow-hidden">
        <table className="w-full table-fixed border-separate border-spacing-0 leading-4">
          <thead>
            <tr className="h-[21px] bg-[#f3f3fb]">
              <th className="border-b border-r border-[#b8b8c0] p-0 font-normal">
                <span className="flex items-center justify-between pl-px pr-1">
                  Name, Vorname(n) <SortMark />
                </span>
              </th>
            </tr>
          </thead>
          <tbody>
            {STUDENTS.map((s, i) => (
              <tr key={s} className={clsx("h-[18px]", i === 0 ? "bg-[#407fff] text-white" : i % 2 === 1 && "bg-[#cbd9f6]")}>
                <td className="p-0 pl-0.5">{s}</td>
              </tr>
            ))}
          </tbody>
        </table>
      </div>
      <div className="flex w-[18px] flex-col items-center bg-[#fafafd]">
        <PickerButton />
        <ScrollButton up label="Nach oben" />
        <Thumb className="h-[17px] bg-linear-to-r from-[#dfe8ff] to-[#a5baec]" />
        <div className="flex-1" />
        <ScrollButton label="Nach unten" />
      </div>
    </div>
  );
}

function StatusBar() {
  return (
    <footer className="flex h-5 items-center border-y border-l border-[#7f9db9] bg-[#f2f2fd] [&>span]:h-full [&>span]:border-[#7f9db9] [&>span]:px-0.5 [&>span+span]:border-l-2">
      <span>schul</span>
      <span className="flex-1">9310/Schulleitung,Betreuer ASV</span>
      <span>Aktuelles Schuljahr: 2021/22</span>
      <span>13.06.2022</span>
    </footer>
  );
}

export default function App() {
  return (
    <div className="flex min-h-screen flex-col whitespace-nowrap border border-[#6a6a70] bg-[#f2f2fd] font-['Open_Sans','Noto_Sans',sans-serif] text-[11px] text-black">
      <TitleBar />
      <MenuBar />
      <MainToolbar />
      <main className="ml-px flex flex-1 flex-col border-l-2 border-[#8c8c94] pb-1 pr-[3px] pt-1">
        <div className="flex h-[23px] gap-px pl-px">
          <button type="button" className="flex w-[51px] items-center justify-center gap-0.5 rounded-t-xs border border-b-0 border-[#7f9db9] bg-[#fcfcff]">
            Start <CloseMark />
          </button>
          <button type="button" className="flex w-20 items-center justify-center gap-1 rounded-t-xs border border-b-0 border-t-3 border-[#7f9db9] border-t-[#3d78f0] bg-[#fcfcff] pb-1">
            {kids} <span className="flex items-center gap-0.5">Schüler <CloseMark /></span>
          </button>
        </div>
        <div className="flex flex-1 flex-col border border-[#8aa0bd]">
          <RecordToolbar />
          <div className="flex flex-1">
            <StudentForm />
            <Navigator />
          </div>
        </div>
      </main>
      <StatusBar />
    </div>
  );
}
